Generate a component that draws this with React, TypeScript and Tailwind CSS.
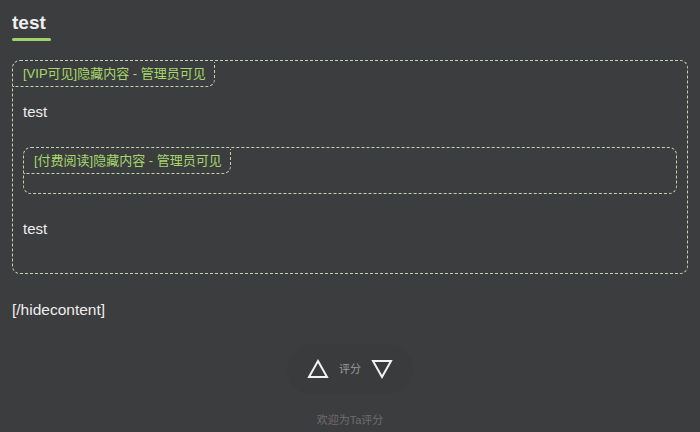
import React from "react";

const font = { fontFamily: '"Liberation Sans", Arial, "Noto Sans CJK SC", sans-serif' };

function HideBox({ label, children }: { label: string; children?: React.ReactNode }) {
  return (
    <div className="rounded-lg border border-dashed border-[#c3d2b0]">
      <div className="inline-block h-[25px] rounded-br-lg border-r border-b border-dashed border-[#c3d2b0] pl-[10px] pr-[8px] text-[13px] leading-[24px] text-[#a6d96a]">
        {label}
      </div>
      {children}
    </div>
  );
}

function Triangle({ down }: { down?: boolean }) {
  return (
    <svg width="22" height="20" viewBox="0 0 22 20" fill="none">
      {down ? (
        <path d="M2 2 H20 L11 18 Z" stroke="#f2f2f2" strokeWidth="2" strokeLinejoin="miter" />
      ) : (
        <path d="M11 2 L20 18 H2 Z" stroke="#f2f2f2" strokeWidth="2" strokeLinejoin="miter" />
      )}
    </svg>
  );
}

export default function App() {
  return (
    <div className="min-h-[432px] w-full bg-[#3c3d3f] px-3 pt-[10px]" style={font}>
      <h1 className="text-[19px] font-bold leading-[26px] text-[#eeeeee]">test</h1>
      <div className="mt-[2px] h-[3px] w-[39px] rounded-full bg-[#9fd36a]" />

      <div className="mt-[19px]">
        <HideBox label="[VIP可见]隐藏内容 - 管理员可见">
          <div className="px-[10px]">
            <p className="mt-[15px] text-[15px] leading-[20px] text-[#eeeeee]">test</p>
            <div className="mt-[25px]">
              <HideBox label="[付费阅读]隐藏内容 - 管理员可见">
                <div className="h-[19px]" />
              </HideBox>
            </div>
            <p className="mt-[25px] mb-[34px] text-[15px] leading-[20px] text-[#eeeeee]">test</p>
          </div>
        </HideBox>
      </div>

      <p className="mt-[26px] text-[15.5px] leading-[20px] text-[#eeeeee]">[/hidecontent]</p>

      <div className="mt-[24px] flex justify-center">
        <div className="flex h-[50px] items-center gap-[10px] rounded-full bg-[#3a3b3d] px-[20px]">
          <Triangle />
          <span className="text-[11px] text-[#9a9a9a]">评分</span>
          <Triangle down />
        </div>
      </div>
      <p className="mt-[18px] text-center text-[11px] text-[#6e6e6e]">欢迎为Ta评分</p>
    </div>
  );
}
